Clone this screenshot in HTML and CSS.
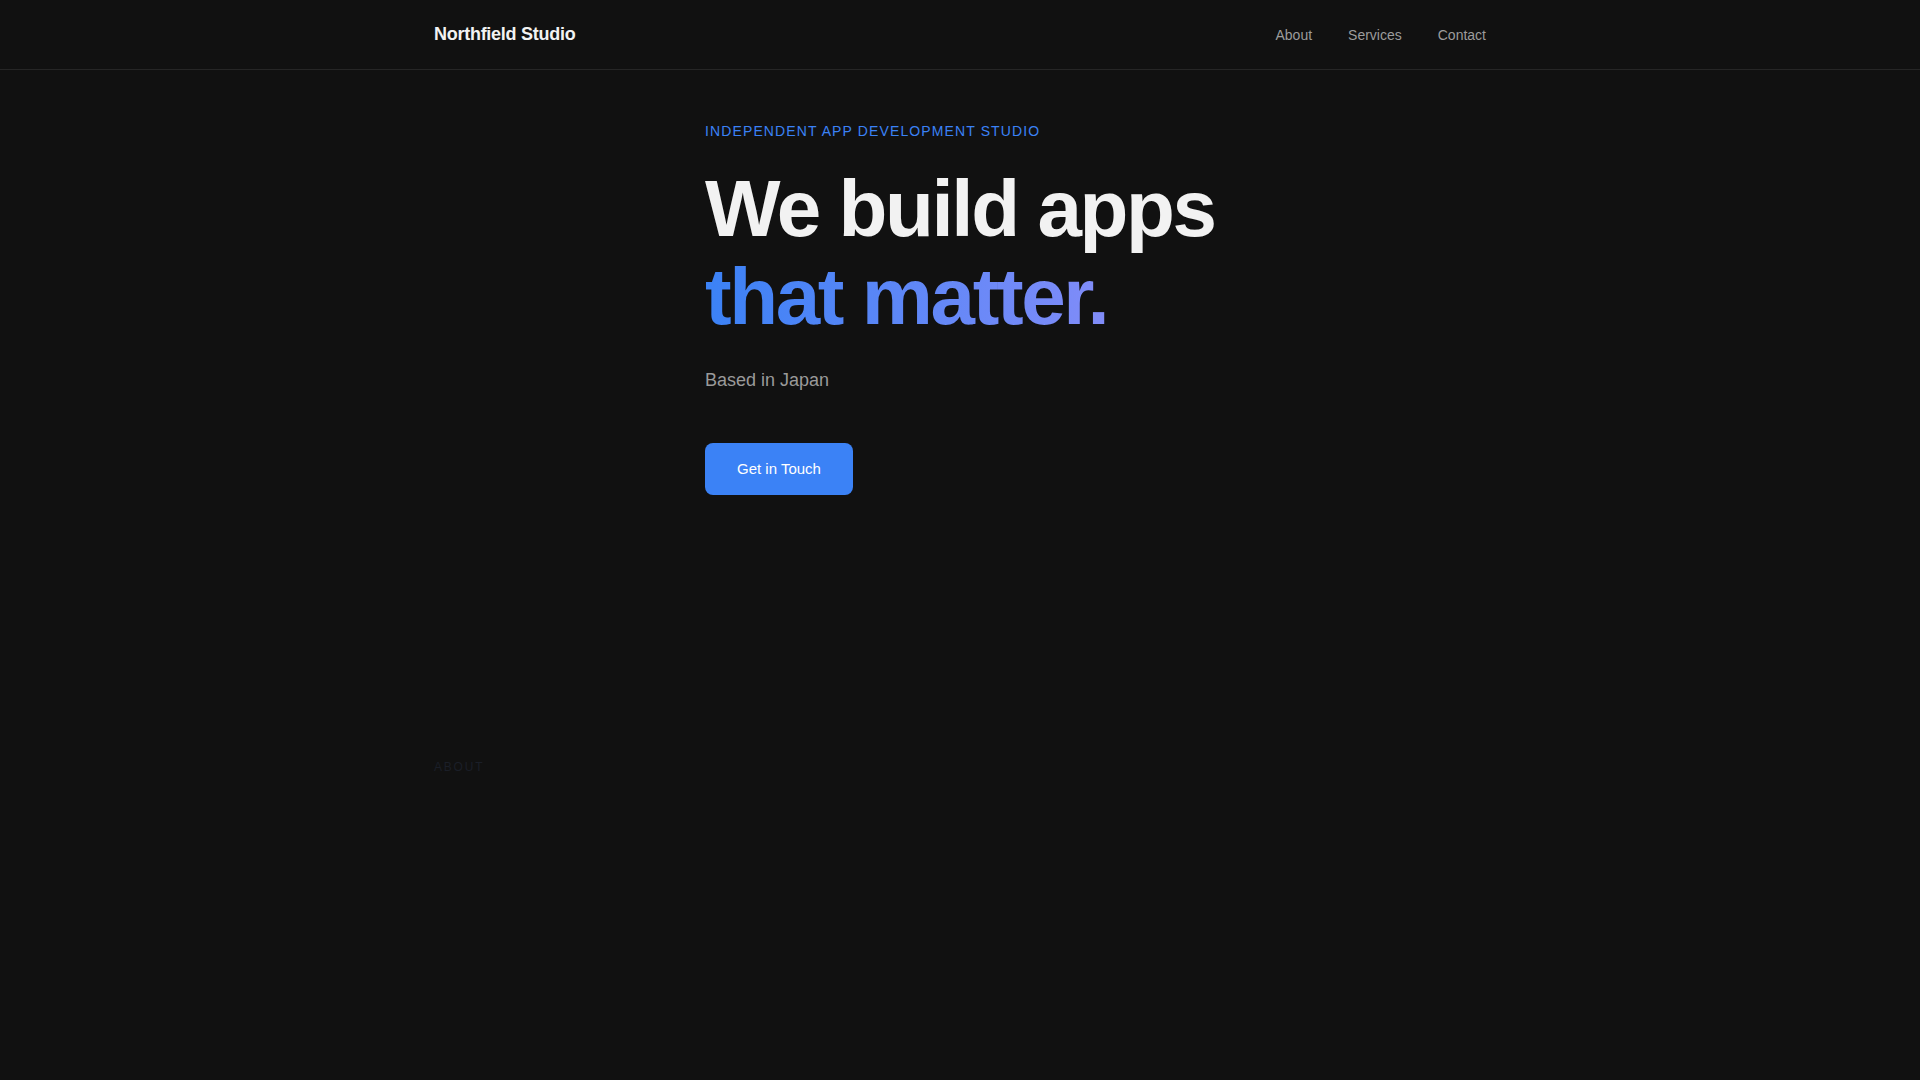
FILE: index.html
```html
<!DOCTYPE html>
<html lang="en">
<head>
<meta charset="utf-8">
<title>Northfield Studio</title>
<link rel="stylesheet" href="styles.css">
</head>
<body>
<header class="site-header">
  <div class="container header-inner">
    <a class="logo" href="#">Northfield Studio</a>
    <nav class="nav">
      <a href="#about">About</a>
      <a href="#services">Services</a>
      <a href="#contact">Contact</a>
    </nav>
  </div>
</header>
<main>
  <section class="hero">
    <div class="hero-inner">
      <p class="eyebrow">INDEPENDENT APP DEVELOPMENT STUDIO</p>
      <h1 class="title">
        <span class="line">We build apps</span>
        <span class="line accent">that matter.</span>
      </h1>
      <p class="sub">Based in Japan</p>
      <a class="btn" href="#contact">Get in Touch</a>
    </div>
  </section>
  <section class="about" id="about">
    <div class="container">
      <p class="section-label">ABOUT</p>
    </div>
  </section>
</main>
</body>
</html>
```

FILE: styles.css
```css
* { box-sizing: border-box; }
html, body { margin: 0; padding: 0; }
body {
  background: #111111;
  color: #f2f2f2;
  font-family: "Liberation Sans", Arial, sans-serif;
  min-height: 100vh;
}
a { text-decoration: none; color: inherit; }
p { margin: 0; }

.container {
  max-width: 1100px;
  margin: 0 auto;
  padding: 0 24px;
}

.site-header {
  border-bottom: 1px solid #262626;
}
.header-inner {
  height: 69px;
  display: flex;
  align-items: center;
  justify-content: space-between;
}
.logo {
  font-size: 18px;
  font-weight: 700;
  letter-spacing: -0.015em;
  color: #f2f2f2;
}
.nav {
  display: flex;
  gap: 36px;
  font-size: 14px;
}
.nav a { color: #9c9c9c; }

.hero {
  display: flex;
  justify-content: center;
  padding-top: 53px;
}
.hero-inner {
  width: 510px;
}
.eyebrow {
  font-size: 14px;
  line-height: 16px;
  letter-spacing: 0.08em;
  color: #3b82f6;
}
.title {
  margin: 26px 0 0;
  font-size: 80px;
  line-height: 88px;
  font-weight: 700;
  letter-spacing: -0.03em;
  white-space: nowrap;
  color: #f2f2f2;
}
.title .line { display: block; }
.title .accent {
  display: inline-block;
  background: linear-gradient(90deg, #3b82f6 0%, #818cf8 100%);
  -webkit-background-clip: text;
  background-clip: text;
  color: transparent;
}
.sub {
  margin-top: 25px;
  font-size: 18px;
  line-height: 28px;
  color: #9a9a9a;
}
.btn {
  display: inline-block;
  margin-top: 49px;
  padding: 16px 32px;
  font-size: 15px;
  line-height: 20px;
  color: #ffffff;
  background: #3b82f6;
  border-radius: 8px;
}

.about {
  padding-top: 264px;
}
.section-label {
  font-size: 12px;
  line-height: 16px;
  letter-spacing: 0.15em;
  color: #1b1f28;
}
```
